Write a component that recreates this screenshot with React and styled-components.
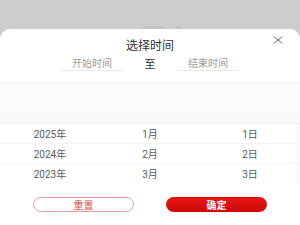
import React from "react";
import styled, { createGlobalStyle } from "styled-components";

const Global = createGlobalStyle`
  html, body { margin: 0; padding: 0; }
  body {
    background: #cdcdcd;
    font-family: "Noto Sans CJK SC", "Liberation Sans", sans-serif;
    width: 300px;
    height: 225px;
    overflow: hidden;
  }
`;

const Page = styled.div`
  height: 225px;
  display: flex;
  flex-direction: column;
  position: relative;
`;

const Peek = styled.div`
  position: absolute;
  top: 26px;
  left: ${(p) => p.x}px;
  width: ${(p) => p.w}px;
  height: 3px;
  background: #c2c2c2;
  border-radius: 1px;
`;

const Panel = styled.div`
  margin-top: 29px;
  flex: 1;
  background: #fff;
  border-radius: 10px 10px 0 0;
  position: relative;
  display: flex;
  flex-direction: column;
  align-items: center;
  padding-top: 8px;
`;

const Title = styled.div`
  font-size: 12px;
  line-height: 16px;
  color: #333;
`;

const Close = styled.svg`
  position: absolute;
  top: 7px;
  right: 17px;
`;

const InputRow = styled.div`
  margin-top: 2px;
  display: flex;
  align-items: center;
`;

const Field = styled.div`
  width: 60px;
  height: 15px;
  border-bottom: 1px solid #e8e8e8;
  font-size: 10px;
  line-height: 15px;
  color: #9a9a9a;
  text-align: center;
`;

const To = styled.div`
  width: 56px;
  text-align: center;
  font-size: 11px;
  line-height: 15px;
  color: #333;
`;

const Picker = styled.div`
  margin-top: 12px;
  align-self: stretch;
  height: 100px;
  border-top: 1px solid #f2f2f2;
  box-shadow: inset -8px 0 6px -6px rgba(0, 0, 0, 0.05);
  display: flex;
  flex-direction: column;
`;

const Mask = styled.div`
  height: 39px;
  background: linear-gradient(#fdfdfd, #f8f8f8);
  border-bottom: 1px solid #eeeeee;
`;

const Row = styled.div`
  height: 20px;
  display: grid;
  grid-template-columns: 1fr 1fr 1fr;
  align-items: center;
  border-bottom: 1px solid ${(p) => (p.last ? "transparent" : "#f4f4f4")};
  box-sizing: border-box;
`;

const Cell = styled.div`
  text-align: center;
  font-size: 10px;
  color: #5a5a5a;
  font-family: "Roboto", "Noto Sans CJK SC", sans-serif;
`;

const Buttons = styled.div`
  margin-top: 13px;
  display: flex;
  gap: 32px;
`;

const Button = styled.div`
  width: 101px;
  height: 15px;
  box-sizing: border-box;
  border-radius: 8px;
  font-size: 10px;
  line-height: 13px;
  text-align: center;
  font-weight: ${(p) => (p.primary ? 700 : 400)};
  color: ${(p) => (p.primary ? "#fff" : "#d9534f")};
  background: ${(p) =>
    p.primary ? "linear-gradient(#e81515, #c80a0a)" : "#fff"};
  border: 1px solid ${(p) => (p.primary ? "#d00" : "#e89a9a")};
`;

const rows = [
  ["2025年", "1月", "1日"],
  ["2024年", "2月", "2日"],
  ["2023年", "3月", "3日"],
];

export default function App() {
  return (
    <Page>
      <Global />
      <Peek x={143} w={20} />
      <Peek x={176} w={5} />
      <Panel>
        <Title>选择时间</Title>
        <Close width="10" height="8" viewBox="0 0 10 8">
          <path d="M0.5 0.5 L9.5 7.5 M9.5 0.5 L0.5 7.5" stroke="#666" strokeWidth="0.9" fill="none" />
        </Close>
        <InputRow>
          <Field>开始时间</Field>
          <To>至</To>
          <Field>结束时间</Field>
        </InputRow>
        <Picker>
          <Mask />
          {rows.map((r, i) => (
            <Row key={i} last={i === rows.length - 1}>
              {r.map((c) => (
                <Cell key={c}>{c}</Cell>
              ))}
            </Row>
          ))}
        </Picker>
        <Buttons>
          <Button>重置</Button>
          <Button primary>确定</Button>
        </Buttons>
      </Panel>
    </Page>
  );
}
